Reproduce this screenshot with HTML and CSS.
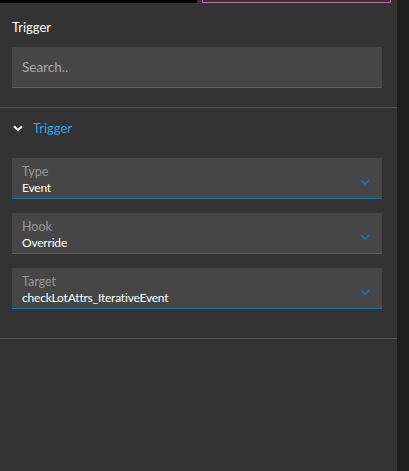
FILE: index.html
```html
<!DOCTYPE html>
<html>
	<head>
		<meta charset="utf-8" />
		<title>Trigger</title>
		<link rel="stylesheet" href="styles.css">
	</head>
	<body>
		<div class="window">
			<div class="panel">
				<div class="topbar">
					<div class="tab-dark"></div>
					<div class="tab-pink"></div>
				</div>

				<div class="search-block">
					<h3 class="panel-title">Trigger</h3>
					<input type="text" class="search-input" placeholder="Search..">
				</div>

				<div class="section">
					<div class="section-header">
						<svg class="section-chevron" width="10" height="7" viewBox="0 0 10 7">
							<path d="M1 1.2 L5 5.2 L9 1.2" fill="none" stroke="#fff" stroke-width="2"/>
						</svg>
						<span>Trigger</span>
					</div>

					<div class="field">
						<div class="field-text">
							<div class="field-label">Type</div>
							<div class="field-value">Event</div>
						</div>
						<svg class="field-chevron" width="10" height="6" viewBox="0 0 10 6">
							<path d="M1 1 L5 5 L9 1" fill="none" stroke="#1c72ad" stroke-width="1.6"/>
						</svg>
					</div>

					<div class="field">
						<div class="field-text">
							<div class="field-label">Hook</div>
							<div class="field-value">Override</div>
						</div>
						<svg class="field-chevron" width="10" height="6" viewBox="0 0 10 6">
							<path d="M1 1 L5 5 L9 1" fill="none" stroke="#1c72ad" stroke-width="1.6"/>
						</svg>
					</div>

					<div class="field">
						<div class="field-text">
							<div class="field-label">Target</div>
							<div class="field-value">checkLotAttrs_IterativeEvent</div>
						</div>
						<svg class="field-chevron" width="10" height="6" viewBox="0 0 10 6">
							<path d="M1 1 L5 5 L9 1" fill="none" stroke="#1c72ad" stroke-width="1.6"/>
						</svg>
					</div>
				</div>
			</div>
			<div class="sidebar-strip"></div>
		</div>
	</body>
</html>
```

FILE: styles.css
```css
html, body {
	margin: 0;
	height: 100%;
}
body {
	background: #333333;
	font-family: Lato, "Noto Sans", sans-serif;
	font-size: 12px;
	color: #ffffff;
}
.window {
	display: flex;
	height: 100%;
}
.panel {
	flex: 1;
	background: #333333;
}
.sidebar-strip {
	width: 12px;
	background: #1e1e1e;
}
.topbar {
	display: flex;
	height: 3px;
	gap: 5px;
}
.tab-dark {
	width: 197px;
	height: 3px;
	background: #000000;
}
.tab-pink {
	width: 189px;
	height: 3px;
	border: 1px solid #c0709c;
	border-top: none;
	box-sizing: border-box;
}
.search-block {
	padding: 14px 15px 19px 12px;
	border-bottom: 1px solid #555555;
}
.panel-title {
	margin: 0 0 10px 0;
	font-size: 13px;
	font-weight: normal;
	line-height: 20px;
}
.search-input {
	display: block;
	width: 100%;
	height: 41px;
	box-sizing: border-box;
	background: #464646;
	border: none;
	border-bottom: 1px solid #1c72ad;
	padding: 0 10px;
	font-family: inherit;
	font-size: 13.5px;
	color: #ffffff;
	outline: none;
}
.search-input::placeholder {
	color: #a8a8a8;
}
.section {
	padding: 10px 15px 29px 12px;
	border-bottom: 1px solid #555555;
}
.section-header {
	display: flex;
	align-items: center;
	gap: 10px;
	height: 20px;
	padding-left: 1px;
	margin-bottom: 20px;
	color: #2ba8e6;
	font-size: 13px;
}
.field {
	display: flex;
	align-items: center;
	height: 41px;
	box-sizing: border-box;
	background: #464646;
	border-bottom: 1px solid #1c72ad;
	padding: 0 12px 0 10px;
	margin-bottom: 14px;
}
.field:last-child {
	margin-bottom: 0;
}
.field-text {
	flex: 1;
	padding-top: 4px;
}
.field-label {
	color: #9a9a9a;
	font-size: 12.5px;
	line-height: 16px;
}
.field-value {
	color: #ffffff;
	font-size: 12px;
	letter-spacing: -0.2px;
	line-height: 16px;
}
.field-chevron {
	margin-top: 8px;
}
```
